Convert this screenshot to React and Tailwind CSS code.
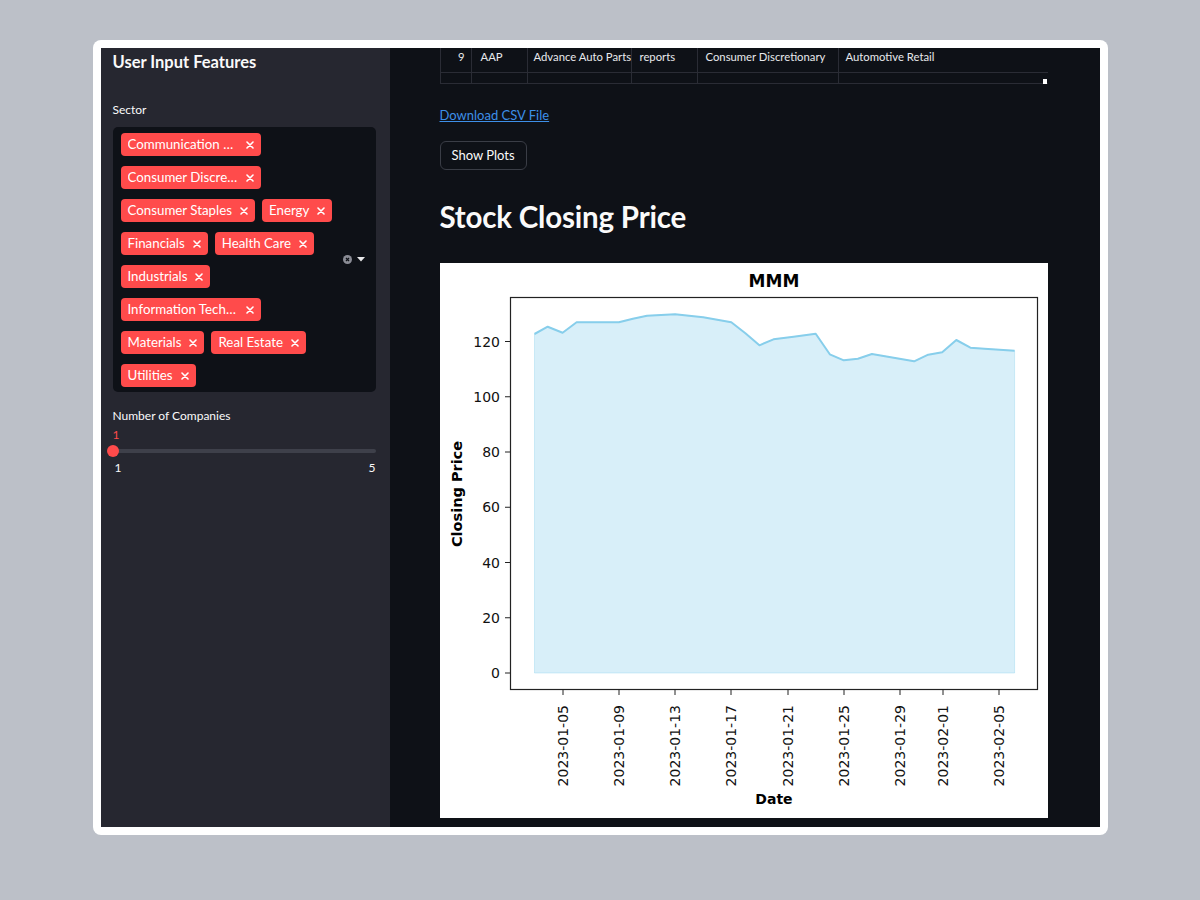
import React from 'react';

const sectors = [
    { label: 'Communication Services', cut: true },
    { label: 'Consumer Discretionary', cut: true },
    { label: 'Consumer Staples' },
    { label: 'Energy' },
    { label: 'Financials' },
    { label: 'Health Care' },
    { label: 'Industrials' },
    { label: 'Information Technology', cut: true },
    { label: 'Materials' },
    { label: 'Real Estate' },
    { label: 'Utilities' },
];

// closing prices, already in chart pixel space (x, y)
const line = [
    [94.5, 71], [107.7, 63.7], [122.6, 69.7], [136.6, 59.3], [178.8, 59.3], [192.9, 55.7],
    [207, 52.7], [235.1, 51.3], [263.2, 54.3], [291.3, 59.3], [305.4, 70.3], [319.4, 82.3],
    [333.5, 76.3], [353.6, 73.7], [375.7, 70.7], [389.8, 91.3], [403.8, 97.3], [417.9, 95.7],
    [431.9, 91], [474.1, 98.3], [488.2, 91.7], [502.2, 89.3], [516.3, 77], [530.4, 84.7],
    [544.4, 85.7], [574.6, 87.7],
];

const xTicks = [
    [123, '2023-01-05'], [179, '2023-01-09'], [235, '2023-01-13'], [291, '2023-01-17'],
    [348, '2023-01-21'], [404, '2023-01-25'], [460, '2023-01-29'], [503, '2023-02-01'],
    [559, '2023-02-05'],
];

const yTicks = [0, 20, 40, 60, 80, 100, 120];

const XIcon = () => (
    <svg width="8" height="8" viewBox="0 0 8 8" className="shrink-0">
        <path d="M1 1L7 7M7 1L1 7" stroke="white" strokeWidth="1.6" strokeLinecap="round" />
    </svg>
);

const Tag = ({ label, cut }) => (
    <span className="inline-flex h-[23px] items-center gap-[8px] rounded-[4px] bg-[#ff4b4b] pl-[7px] pr-[7px] text-[13.3px] text-white">
        <span className={cut ? 'w-[110px] truncate whitespace-nowrap' : 'whitespace-nowrap'}>{label}</span>
        <XIcon />
    </span>
);

const PriceChart = () => {
    const pts = line.map(p => p.join(',')).join(' ');
    const font = 'DejaVu Sans, sans-serif';
    return (
        <svg width="608" height="555" viewBox="0 0 608 555" className="block bg-white">
            <text x="334" y="18" textAnchor="middle" dominantBaseline="central" fontFamily={font} fontWeight="bold" fontSize="17" fill="#000">MMM</text>
            <polygon points={`94.5,410 ${pts} 574.6,410`} fill="#87ceeb" fillOpacity="0.32" stroke="#87ceeb" strokeOpacity="0.35" strokeWidth="1" />
            <polyline points={pts} fill="none" stroke="#87ceeb" strokeWidth="2" strokeLinejoin="round" />
            <rect x="70.5" y="34.5" width="527" height="392" fill="none" stroke="#222" strokeWidth="1.2" />
            {yTicks.map(v => {
                const y = 410 - v * 2.7625;
                return (
                    <g key={v}>
                        <line x1="65" y1={y} x2="70.5" y2={y} stroke="#222" strokeWidth="1" />
                        <text x="60" y={y} textAnchor="end" dominantBaseline="central" fontFamily={font} fontSize="14" fill="#111">{v}</text>
                    </g>
                );
            })}
            {xTicks.map(([x, l]) => (
                <g key={l}>
                    <line x1={x} y1="426.5" x2={x} y2="432" stroke="#222" strokeWidth="1" />
                    <text x={x} y="442" transform={`rotate(-90 ${x} 442)`} textAnchor="end" dominantBaseline="central" fontFamily={font} fontSize="14" fill="#111">{l}</text>
                </g>
            ))}
            <text x="17" y="231" transform="rotate(-90 17 231)" textAnchor="middle" dominantBaseline="central" fontFamily={font} fontWeight="bold" fontSize="14.5" fill="#000">Closing Price</text>
            <text x="334" y="536" textAnchor="middle" dominantBaseline="central" fontFamily={font} fontWeight="bold" fontSize="14" fill="#000">Date</text>
        </svg>
    );
};

const cols = 'grid grid-cols-[31px_56px_104px_66px_141px_210px]';
const cell = 'flex h-[30px] items-center whitespace-nowrap overflow-hidden border-r border-b border-[#2a2c35] text-[11.3px] text-[#e8e9ec]';

const App = () => {
    return (
        <div className="flex min-h-screen w-full justify-center bg-[#bcc0c8] pt-[40px] font-['Lato',sans-serif]">
            <div className="h-[795px] w-[1015px] rounded-[8px] bg-white p-2">
                <div className="flex h-full w-full overflow-hidden">
                    {/* sidebar */}
                    <aside className="flex w-[289px] shrink-0 flex-col bg-[#262730] pl-3 pr-[14px] text-[#fafafa]">
                        <h2 className="text-[16.5px] font-bold leading-[28px]">User Input Features</h2>
                        <p className="mt-[26px] text-[12px] leading-[16px]">Sector</p>
                        <div className="mt-[9px] flex h-[265px] items-center rounded-[5px] bg-[#0e1117] pl-2 pr-[11px]">
                            <div className="flex w-[224px] flex-wrap content-start gap-x-[7px] gap-y-[10px] self-start pt-[6px]">
                                {sectors.map(s => <Tag key={s.label} {...s} />)}
                            </div>
                            <div className="ml-auto flex items-center gap-[5px]">
                                <svg width="9" height="9" viewBox="0 0 10 10">
                                    <circle cx="5" cy="5" r="5" fill="#8a8c95" />
                                    <path d="M3.3 3.3L6.7 6.7M6.7 3.3L3.3 6.7" stroke="#0e1117" strokeWidth="1.3" />
                                </svg>
                                <svg width="8" height="5" viewBox="0 0 8 5">
                                    <path d="M0 0H8L4 4.5Z" fill="#e8e8ea" />
                                </svg>
                            </div>
                        </div>
                        <p className="mt-[16px] text-[12px] leading-[16px]">Number of Companies</p>
                        <div className="mt-[4px]">
                            <span className="block text-[12px] leading-[14px] text-[#ff4b4b]">1</span>
                            <div className="relative mt-[7px] h-[4px] rounded-full bg-[#3e404a]">
                                <span className="absolute -left-[6px] -top-[4px] h-[12px] w-[12px] rounded-full bg-[#ff4b4b]" />
                            </div>
                            <div className="mt-[8px] flex justify-between pl-[2px] text-[12px] leading-[14px]">
                                <span>1</span>
                                <span>5</span>
                            </div>
                        </div>
                    </aside>

                    {/* main */}
                    <main className="flex-1 overflow-hidden bg-[#0e1117] pl-[50px] text-[#fafafa]">
                        <div className="w-[608px]">
                            <div className="relative h-[36px] overflow-hidden border-l border-[#2a2c35]">
                                <div className="-mt-[5px]">
                                    <div className={cols}>
                                        <div className={`${cell} justify-end pr-[6px] text-[#9ea2ab]`}>9</div>
                                        <div className={`${cell} pl-[9px]`}>AAP</div>
                                        <div className={`${cell} pl-[6px]`}>Advance Auto Parts</div>
                                        <div className={`${cell} pl-[8px]`}>reports</div>
                                        <div className={`${cell} pl-[8px]`}>Consumer Discretionary</div>
                                        <div className={`${cell} pl-[7px]`}>Automotive Retail</div>
                                    </div>
                                    <div className={cols}>
                                        <div className={`${cell} justify-end pr-[6px] pt-[14px] text-[#9ea2ab]`}>10</div>
                                        <div className={`${cell} pl-[9px] pt-[14px]`}>AMD</div>
                                        <div className={`${cell} pl-[6px] pt-[14px]`}>Advanced Micro Devices</div>
                                        <div className={`${cell} pl-[8px] pt-[14px]`}>reports</div>
                                        <div className={`${cell} pl-[8px] pt-[14px]`}>Information Technology</div>
                                        <div className={`${cell} pl-[7px] pt-[14px]`}>Semiconductors</div>
                                    </div>
                                </div>
                                <span className="absolute bottom-0 left-0 right-0 h-px bg-[#2a2c35]" />
                                <span className="absolute bottom-0 right-[1px] h-[5px] w-[4px] bg-white" />
                            </div>

                            <a href="#" className="mt-[22px] block w-fit text-[13px] leading-[18px] text-[#3d8fe8] underline">Download CSV File</a>

                            <button className="mt-[17px] h-[29px] rounded-[6px] border border-[#3a3d46] bg-[#0e1117] px-[11px] text-[13px] text-[#fafafa]">
                                Show Plots
                            </button>

                            <h1 className="mt-[28px] text-[29.5px] font-bold leading-[38px] tracking-[-0.2px]">Stock Closing Price</h1>

                            <div className="mt-[27px]">
                                <PriceChart />
                            </div>
                        </div>
                    </main>
                </div>
            </div>
        </div>
    );
};

export default App;
